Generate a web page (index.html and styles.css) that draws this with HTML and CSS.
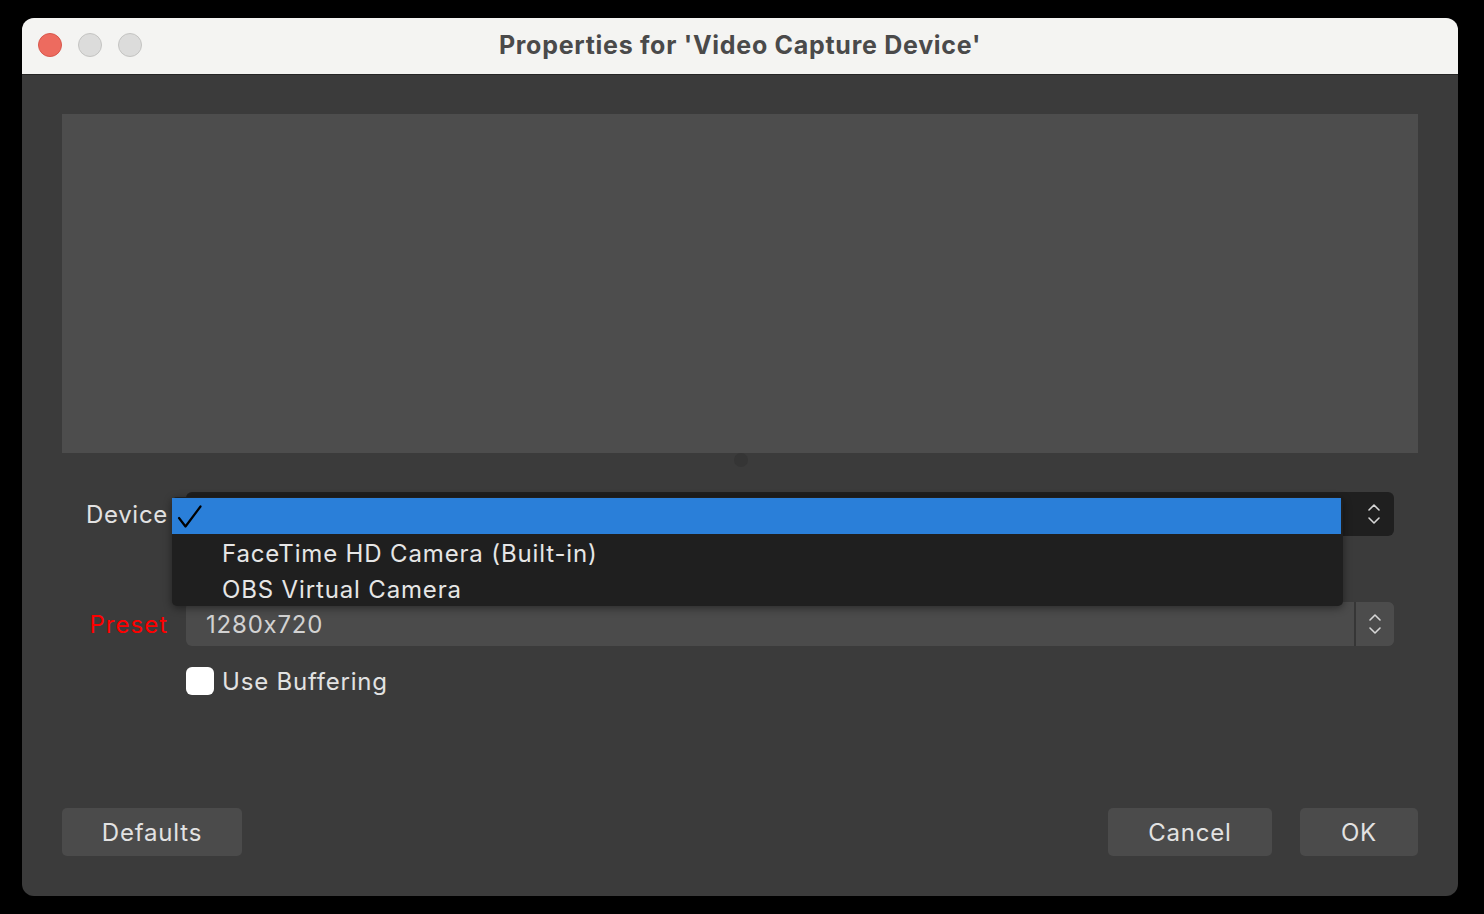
FILE: index.html
```html
<!DOCTYPE html>
<html>
<head>
<meta charset="utf-8">
<link rel="stylesheet" href="styles.css">
</head>
<body>
<div class="window">
  <div class="titlebar">
    <div class="lights">
      <span class="light red"></span>
      <span class="light grey"></span>
      <span class="light grey"></span>
    </div>
    <div class="title">Properties for 'Video Capture Device'</div>
  </div>
  <div class="content">
    <div class="preview"></div>
    <div class="splitter"><span class="handle"></span></div>
    <div class="form">
      <div class="row device-row">
        <label class="label">Device</label>
        <div class="combo combo-dark">
          <span class="combo-text"></span>
          <span class="arrows">
            <svg width="14" height="24" viewBox="0 0 14 24"><path d="M2 8 L7 3 L12 8" fill="none" stroke="#d6d6d6" stroke-width="1.6" stroke-linecap="round" stroke-linejoin="round"/><path d="M2 16 L7 21 L12 16" fill="none" stroke="#d6d6d6" stroke-width="1.6" stroke-linecap="round" stroke-linejoin="round"/></svg>
          </span>
          <div class="popup">
            <div class="item selected">
              <svg class="check" width="26" height="26" viewBox="0 0 26 26"><path d="M2 14 L8.5 22.5 L23.5 2.5" fill="none" stroke="#000" stroke-width="2.2" stroke-linecap="round" stroke-linejoin="round"/></svg>
            </div>
            <div class="item">FaceTime HD Camera (Built-in)</div>
            <div class="item">OBS Virtual Camera</div>
          </div>
        </div>
      </div>
      <div class="row preset-row">
        <label class="label label-red">Preset</label>
        <div class="combo combo-light">
          <span class="combo-text">1280x720</span>
          <span class="arrows arrows-split">
            <svg width="14" height="24" viewBox="0 0 14 24"><path d="M2 8 L7 3 L12 8" fill="none" stroke="#d6d6d6" stroke-width="1.6" stroke-linecap="round" stroke-linejoin="round"/><path d="M2 16 L7 21 L12 16" fill="none" stroke="#d6d6d6" stroke-width="1.6" stroke-linecap="round" stroke-linejoin="round"/></svg>
          </span>
        </div>
      </div>
      <div class="row check-row">
        <span class="spacer-label"></span>
        <div class="checkwrap">
          <span class="checkbox"></span>
          <span class="check-label">Use Buffering</span>
        </div>
      </div>
    </div>
    <div class="fill"></div>
    <div class="buttons">
      <button class="btn btn-defaults">Defaults</button>
      <div class="btn-group">
        <button class="btn btn-cancel">Cancel</button>
        <button class="btn btn-ok">OK</button>
      </div>
    </div>
  </div>
</div>
</body>
</html>
```

FILE: styles.css
```css
* { box-sizing: border-box; }
html, body {
  margin: 0;
  padding: 0;
  background: #000;
  width: 1484px;
  height: 914px;
  overflow: hidden;
  font-family: Inter, "Noto Sans", "Liberation Sans", sans-serif;
  font-feature-settings: "calt" 0;
}
.window {
  margin: 18px 0 0 22px;
  width: 1436px;
  height: 878px;
  border-radius: 12px;
  overflow: hidden;
  display: flex;
  flex-direction: column;
  background: #3b3b3b;
}
.titlebar {
  height: 57px;
  background: #f4f4f2;
  border-bottom: 1px solid #262626;
  position: relative;
  display: flex;
  align-items: center;
  justify-content: center;
  flex: none;
}
.lights {
  position: absolute;
  left: 16px;
  top: 15px;
  display: flex;
  gap: 16px;
}
.light {
  width: 24px;
  height: 24px;
  border-radius: 50%;
  display: block;
}
.red { background: #ed6b5f; border: 1px solid #d8574c; }
.grey { background: #dcdcdb; border: 1px solid #c4c4c2; }
.title {
  font-size: 25px;
  font-weight: 700;
  color: #4a4a4a;
  letter-spacing: 0.72px;
  margin-top: -2px;
}
.content {
  flex: 1;
  display: flex;
  flex-direction: column;
  padding: 39px 40px 40px 40px;
}
.preview {
  height: 339px;
  background: #4d4d4d;
  flex: none;
}
.splitter {
  height: 39px;
  display: flex;
  justify-content: center;
  flex: none;
}
.handle {
  width: 14px;
  height: 14px;
  border-radius: 50%;
  background: #353535;
  margin-top: 0px;
  margin-left: 1px;
}
.form {
  display: flex;
  flex-direction: column;
  margin-right: 24px;
}
.row {
  display: grid;
  grid-template-columns: 106px 1fr;
  column-gap: 18px;
  align-items: center;
}
.device-row { height: 44px; }
.preset-row { height: 44px; margin-top: 66px; }
.check-row { height: 28px; margin-top: 20px; }
.label {
  text-align: right;
  font-size: 24px;
  color: #e2e2e2;
  letter-spacing: 0.7px;
  padding-top: 1px;
}
.label-red { color: #fe0000; letter-spacing: 1px; }
.combo {
  height: 44px;
  border-radius: 6px;
  position: relative;
  display: flex;
  align-items: center;
}
.combo-dark { background: #1f1f1f; }
.combo-light { background: #4b4b4b; }
.combo-text {
  flex: 1;
  padding-left: 20px;
  padding-top: 1px;
  font-size: 24px;
  color: #d2d2d2;
  letter-spacing: 0.8px;
}
.arrows {
  width: 40px;
  height: 44px;
  display: flex;
  align-items: center;
  justify-content: center;
}
.arrows-split {
  border-left: 2px solid #363636;
  background: #4c4c4c;
  border-radius: 0 6px 6px 0;
}
.popup {
  position: absolute;
  left: -14px;
  top: 5px;
  width: 1171px;
  height: 109px;
  background: #1f1f1f;
  border-radius: 5px;
  padding: 1px 2px 0 0;
  box-shadow: 0 2px 8px rgba(0,0,0,0.45);
  z-index: 5;
}
.item {
  height: 36px;
  display: flex;
  align-items: center;
  padding-left: 50px;
  padding-top: 2px;
  font-size: 24px;
  color: #e6e6e6;
  letter-spacing: 0.85px;
  position: relative;
}
.item.selected {
  background: #2a7fd9;
}
.check {
  position: absolute;
  left: 5px;
  top: 6px;
}
.checkwrap {
  display: flex;
  align-items: center;
  gap: 8px;
}
.checkbox {
  width: 28px;
  height: 28px;
  border-radius: 6px;
  background: #fff;
  display: block;
}
.check-label {
  font-size: 24px;
  color: #e2e2e2;
  letter-spacing: 0.8px;
  padding-top: 1px;
}
.fill { flex: 1; }
.buttons {
  display: flex;
  justify-content: space-between;
  height: 48px;
  flex: none;
}
.btn-group {
  display: flex;
  gap: 28px;
}
.btn {
  height: 48px;
  border: none;
  border-radius: 5px;
  background: #4b4b4b;
  color: #e2e2e2;
  font-family: Inter, "Noto Sans", "Liberation Sans", sans-serif;
  font-size: 24px;
  letter-spacing: 0.8px;
  padding: 1px 0 0 0;
}
.btn-defaults { width: 180px; }
.btn-cancel { width: 164px; }
.btn-ok { width: 118px; }
```
